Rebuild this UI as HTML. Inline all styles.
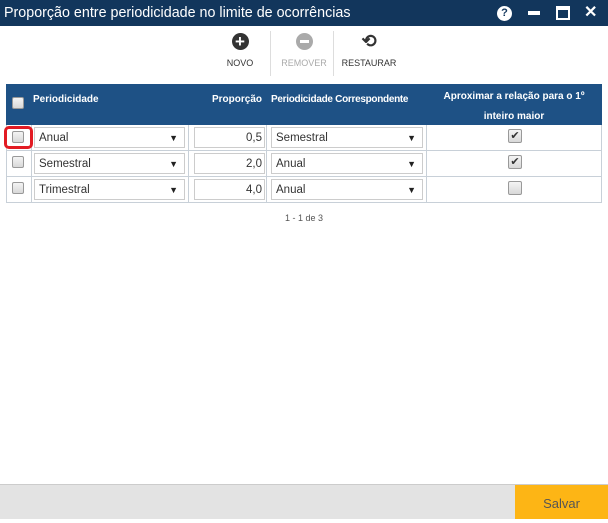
<!DOCTYPE html>
<html><head><meta charset="utf-8"><style>
*{box-sizing:border-box;margin:0;padding:0}
body{width:608px;height:519px;position:relative;background:#fff;font-family:"Liberation Sans",sans-serif;overflow:hidden;color:#333}
.title{position:absolute;left:0;top:0;width:608px;height:26px;background:#12365c;color:#fff;font-size:14.3px;line-height:26px;padding-left:4px}
.tb{position:absolute;top:30px;text-align:center;font-size:9px;color:#333}
.sep{position:absolute;top:31px;width:1px;height:45px;background:#ddd}
.hdr{position:absolute;left:6px;top:84px;width:596px;height:41px;background:#1e5185;color:#fff;font-size:10px;font-weight:bold}
.hdr span{position:absolute}
.row{position:absolute;left:6px;width:596px;height:26px;border:1px solid #c8d0d8;border-top:none}
.cell{position:absolute;top:0;height:25px;border-right:1px solid #c8d0d8}
.sel{position:absolute;top:2px;height:21px;border:1px solid #ccc;background:#fff;font-size:11.5px;line-height:21px;padding-left:4px;color:#333}
.sel:after{content:"▼";position:absolute;right:6px;top:0;font-size:9px;color:#222}
.num{position:absolute;top:2px;height:21px;border:1px solid #ccc;font-size:11.5px;line-height:21px;text-align:right;padding-right:2px}
.cb{position:absolute;width:12px;height:12px;border:1px solid #999;border-radius:2px;background:linear-gradient(#f4f4f4,#d8d8d8)}
.chk{position:absolute;width:14px;height:14px;border:1px solid #999;border-radius:2px;background:linear-gradient(#f4f4f4,#d8d8d8);font-size:11px;line-height:12px;text-align:center;color:#333}
</style></head><body>
<div class="title">Proporção entre periodicidade no limite de ocorrências
<span style="position:absolute;left:497px;top:6px;width:15px;height:15px;border-radius:50%;background:#fff;color:#12365c;font-size:11px;font-weight:bold;line-height:15px;text-align:center">?</span>
<span style="position:absolute;left:528px;top:11px;width:12px;height:4px;background:#fff"></span>
<span style="position:absolute;left:556px;top:6px;width:14px;height:14px;border:2px solid #fff;border-top-width:4px"></span>
<span style="position:absolute;left:584px;top:0;font-size:16px;font-weight:bold">✕</span>
</div>
<div class="tb" style="left:218px;width:44px"><div style="width:17px;height:17px;border-radius:50%;background:#333;color:#fff;margin:3px auto 0;font-weight:bold;font-size:17px;line-height:17px">+</div><div style="margin-top:8px">NOVO</div></div>
<div class="sep" style="left:270px"></div>
<div class="tb" style="left:276px;width:56px;color:#aaa"><div style="width:17px;height:17px;border-radius:50%;background:#aaa;margin:3px auto 0;position:relative"><span style="position:absolute;left:4px;top:7px;width:9px;height:3px;background:#fff"></span></div><div style="margin-top:8px">REMOVER</div></div>
<div class="sep" style="left:333px"></div>
<div class="tb" style="left:338px;width:62px"><div style="margin:2px auto 0;font-size:18px;font-weight:bold;line-height:19px">⟲</div><div style="margin-top:7px">RESTAURAR</div></div>

<div class="hdr">
<span class="cb" style="left:6px;top:13px"></span>
<span style="left:27px;top:10px">Periodicidade</span>
<span style="left:206px;top:10px">Proporção</span>
<span style="left:265px;top:10px;letter-spacing:-0.3px">Periodicidade Correspondente</span>
<span style="left:420px;top:3px;width:176px;text-align:center;line-height:20px;white-space:nowrap">Aproximar a relação para o 1º<br>inteiro maior</span>
</div>

<div class="row" style="top:125px">
<div class="cell" style="left:0;width:25px"></div><div class="cell" style="left:25px;width:157px"></div><div class="cell" style="left:182px;width:78px"></div><div class="cell" style="left:260px;width:160px"></div>
<span class="cb" style="left:5px;top:6px"></span>
<span style="position:absolute;left:-3px;top:1px;width:29px;height:23px;border:3px solid #e21b23;border-radius:5px"></span>
<div class="sel" style="left:27px;width:151px">Anual</div>
<div class="num" style="left:187px;width:71px">0,5</div>
<div class="sel" style="left:264px;width:152px">Semestral</div>
<span class="chk" style="left:501px;top:4px">✔</span>
</div>
<div class="row" style="top:151px">
<div class="cell" style="left:0;width:25px"></div><div class="cell" style="left:25px;width:157px"></div><div class="cell" style="left:182px;width:78px"></div><div class="cell" style="left:260px;width:160px"></div>
<span class="cb" style="left:5px;top:5px"></span>
<div class="sel" style="left:27px;width:151px">Semestral</div>
<div class="num" style="left:187px;width:71px">2,0</div>
<div class="sel" style="left:264px;width:152px">Anual</div>
<span class="chk" style="left:501px;top:4px">✔</span>
</div>
<div class="row" style="top:177px">
<div class="cell" style="left:0;width:25px"></div><div class="cell" style="left:25px;width:157px"></div><div class="cell" style="left:182px;width:78px"></div><div class="cell" style="left:260px;width:160px"></div>
<span class="cb" style="left:5px;top:5px"></span>
<div class="sel" style="left:27px;width:151px">Trimestral</div>
<div class="num" style="left:187px;width:71px">4,0</div>
<div class="sel" style="left:264px;width:152px">Anual</div>
<span class="chk" style="left:501px;top:4px"></span>
</div>
<div style="position:absolute;left:0;width:608px;top:213px;text-align:center;font-size:9px;color:#555">1 - 1 de 3</div>

<div style="position:absolute;left:0;top:484px;width:608px;height:35px;background:#e3e3e3;border-top:1px solid #ccc"></div>
<div style="position:absolute;left:515px;top:485px;width:93px;height:34px;background:#fdb515;color:#555;font-size:13px;text-align:center;line-height:38px">Salvar</div>
</body></html>
